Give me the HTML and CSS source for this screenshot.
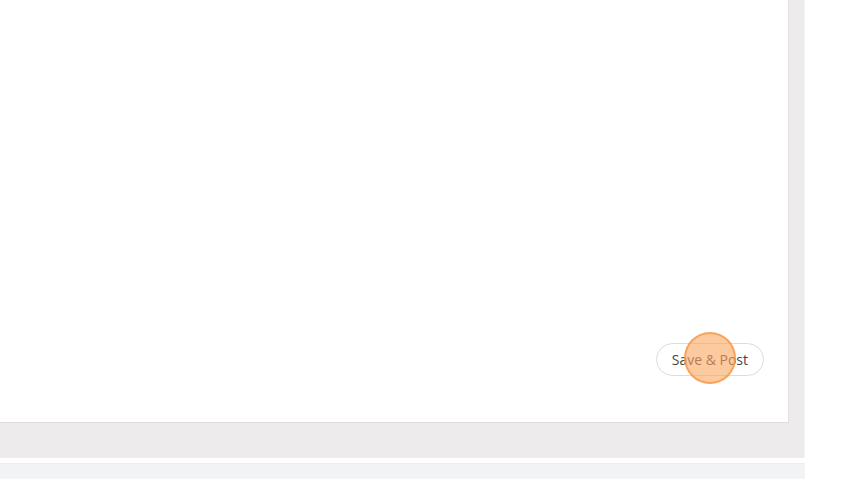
FILE: index.html
```html
<!DOCTYPE html>
<html>
<head>
    <title>Post Editor</title>
    <link rel="stylesheet" href="styles.css">
</head>
<body>
    <div class="page">
        <div class="panel">
            <div class="card">
                <div class="editor"></div>
                <div class="actions">
                    <button type="button" class="btn-post">Save &amp; Post</button>
                    <span class="click-marker"></span>
                </div>
            </div>
        </div>
        <div class="spacer"></div>
        <div class="next-bar"></div>
    </div>
</body>
</html>
```
FILE: styles.css
```css
body {
    font-family: "Open Sans", Arial, sans-serif;
    margin: 0;
    padding: 0;
    background-color: #fff;
}
.page {
    width: 805px;
}
.panel {
    background-color: #edebeb;
    padding: 0 15px 35px 0;
    border-right: 1px solid #f5f5f5;
}
.card {
    background-color: #fff;
    height: 423px;
    border-bottom: 1px solid #dedcdc;
    border-right: 1px solid #e2e0e0;
    display: flex;
    flex-direction: column;
    box-sizing: border-box;
}
.editor {
    flex: 1;
}
.actions {
    display: flex;
    justify-content: flex-end;
    padding: 0 24px 46px 0;
    position: relative;
}
.btn-post {
    font-family: "Open Sans", Arial, sans-serif;
    font-size: 14px;
    color: #444;
    background-color: #fff;
    border: 1px solid #dcdcdc;
    border-radius: 17px;
    height: 33px;
    padding: 0 15px;
}
.click-marker {
    position: absolute;
    right: 52px;
    top: -11px;
    width: 52px;
    height: 52px;
    border-radius: 50%;
    background-color: rgba(251, 165, 95, 0.6);
    border: 2px solid rgba(245, 150, 70, 0.75);
    box-sizing: border-box;
}
.spacer {
    height: 5px;
}
.next-bar {
    height: 14px;
    background-color: #f2f3f4;
    border-top: 1px solid #eceeef;
    border-bottom: 1px solid #f5f6f7;
}
```
